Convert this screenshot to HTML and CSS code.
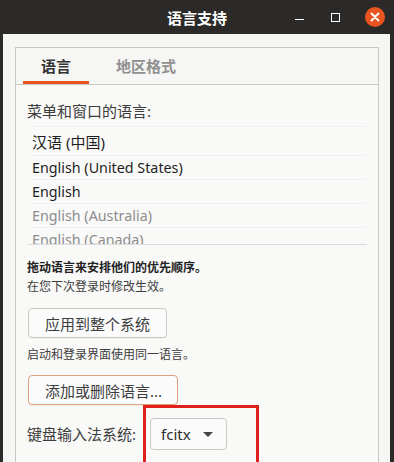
FILE: index.html
```html
<!DOCTYPE html>
<html lang="zh-CN">
<head>
  <meta charset="UTF-8" />
  <title>语言支持</title>
  <link rel="stylesheet" href="styles.css">
</head>
<body>
  <div class="window">
    <div class="titlebar">
      <span class="title">语言支持</span>
      <div class="controls">
        <span class="ctl-min"></span>
        <span class="ctl-max"></span>
        <span class="ctl-close">
          <svg width="20" height="20" viewBox="0 0 20 20">
            <circle cx="10" cy="10" r="10" fill="#e95420"/>
            <path d="M6.5 6.5 L13.5 13.5 M13.5 6.5 L6.5 13.5" stroke="#fff" stroke-width="1.8" stroke-linecap="round"/>
          </svg>
        </span>
      </div>
    </div>
    <div class="content">
      <div class="notebook">
        <div class="tabs">
          <div class="tab active">语言</div>
          <div class="tab">地区格式</div>
        </div>
        <div class="page">
          <div class="label">菜单和窗口的语言:</div>
          <ul class="lang-list">
            <li class="first">汉语 (中国)</li>
            <li>English (United States)</li>
            <li>English</li>
            <li class="dim">English (Australia)</li>
            <li class="dim">English (Canada)</li>
          </ul>
          <div class="hint bold">拖动语言来安排他们的优先顺序。</div>
          <div class="hint">在您下次登录时修改生效。</div>
          <button class="btn">应用到整个系统</button>
          <div class="hint">启动和登录界面使用同一语言。</div>
          <button class="btn focused">添加或删除语言...</button>
          <div class="im-row">
            <span class="label im-label">键盘输入法系统:</span>
            <div class="highlight">
              <div class="combo">fcitx <span class="arrow"></span></div>
            </div>
          </div>
        </div>
      </div>
    </div>
  </div>
</body>
</html>
```

FILE: styles.css
```css
:root {
  --dark: #2c2a29;
  --bg: #f6f6f5;
  --border: #cdc7c2;
  --text: #3d3d3d;
  --orange: #e95420;
}
body {
  margin: 0;
  background: var(--dark);
  font-family: "Noto Sans", "Noto Sans CJK SC", sans-serif;
  color: var(--text);
  overflow: hidden;
}
.window {
  width: 394px;
  height: 462px;
  display: flex;
  flex-direction: column;
}
.titlebar {
  height: 34px;
  flex: none;
  position: relative;
  display: flex;
  align-items: center;
  justify-content: center;
  color: #fff;
}
.title {
  font-size: 15px;
  font-weight: 700;
  margin-top: 1px;
}
.controls {
  position: absolute;
  right: 9px;
  top: 7px;
  display: flex;
  align-items: center;
}
.ctl-min {
  width: 9px;
  height: 1px;
  background: #fff;
  margin-right: 27px;
  margin-top: 4px;
}
.ctl-max {
  width: 7px;
  height: 7px;
  border: 1px solid #fff;
  margin-right: 25px;
}
.ctl-close svg {
  display: block;
}
.content {
  flex: 1;
  margin: 0 4px 0 3px;
  background: var(--bg);
  padding: 13px 11px 0 12px;
  overflow: hidden;
}
.notebook {
  border: 1px solid var(--border);
  border-bottom: none;
  height: 100%;
  display: flex;
  flex-direction: column;
}
.tabs {
  height: 36px;
  flex: none;
  display: flex;
  border-bottom: 1px solid var(--border);
  padding-left: 7px;
}
.tab {
  font-size: 15px;
  font-weight: 700;
  color: #8f8f8f;
  display: flex;
  align-items: center;
  white-space: nowrap;
  margin-top: -1px;
}
.tab.active {
  color: #333;
  width: 66px;
  justify-content: center;
  box-shadow: inset 0 -3px 0 var(--orange);
  margin-right: 27px;
}
.page {
  flex: 1;
  background: #f9f9f8;
  padding: 15px 11px 0 11px;
}
.label {
  font-size: 15px;
  color: var(--text);
  white-space: nowrap;
}
.lang-list {
  list-style: none;
  margin: 5px 0 0 1px;
  padding: 0;
  height: 117px;
  overflow: hidden;
  border-top: 1px solid #f0f0f0;
  border-bottom: 1px solid #dcdcdc;
}
.lang-list li {
  height: 23px;
  line-height: 23px;
  border-bottom: 1px solid #f0f0f0;
  padding-left: 4px;
  font-size: 14.3px;
  color: #1e1e1e;
}
.lang-list li.first {
  height: 28px;
  line-height: 30px;
  font-size: 15px;
}
.lang-list li.dim {
  color: #8c8c8c;
}
.hint {
  font-size: 12px;
  color: #3d3d3d;
  line-height: 19px;
  white-space: nowrap;
}
.hint.bold {
  font-weight: 700;
  color: #222;
  margin-top: 13px;
}
.btn {
  display: block;
  font-family: inherit;
  font-size: 15px;
  color: #3d3d3d;
  background: #fbfbfb;
  border: 1px solid #cdc7c2;
  border-radius: 4px;
  height: 30px;
  padding: 0 16px;
  margin: 12px 0 7px 1px;
  box-shadow: 0 1px 0 rgba(0, 0, 0, 0.04);
}
.btn.focused {
  border-color: #e0a080;
  margin: 11px 0 0 1px;
  padding: 0 15px 0 16px;
}
.im-row {
  display: flex;
  align-items: flex-start;
}
.im-label {
  margin-top: 18px;
}
.highlight {
  margin-left: 7px;
  border: 3px solid #e0201c;
  padding: 10px 29px 20px 4px;
}
.combo {
  height: 30px;
  border: 1px solid #cdc7c2;
  border-radius: 4px;
  background: #fbfbfb;
  display: flex;
  align-items: center;
  padding: 0 13px 0 10px;
  font-size: 15px;
  color: #2d2d2d;
  gap: 12px;
}
.arrow {
  width: 0;
  height: 0;
  border-left: 5px solid transparent;
  border-right: 5px solid transparent;
  border-top: 5px solid #444;
}
```
